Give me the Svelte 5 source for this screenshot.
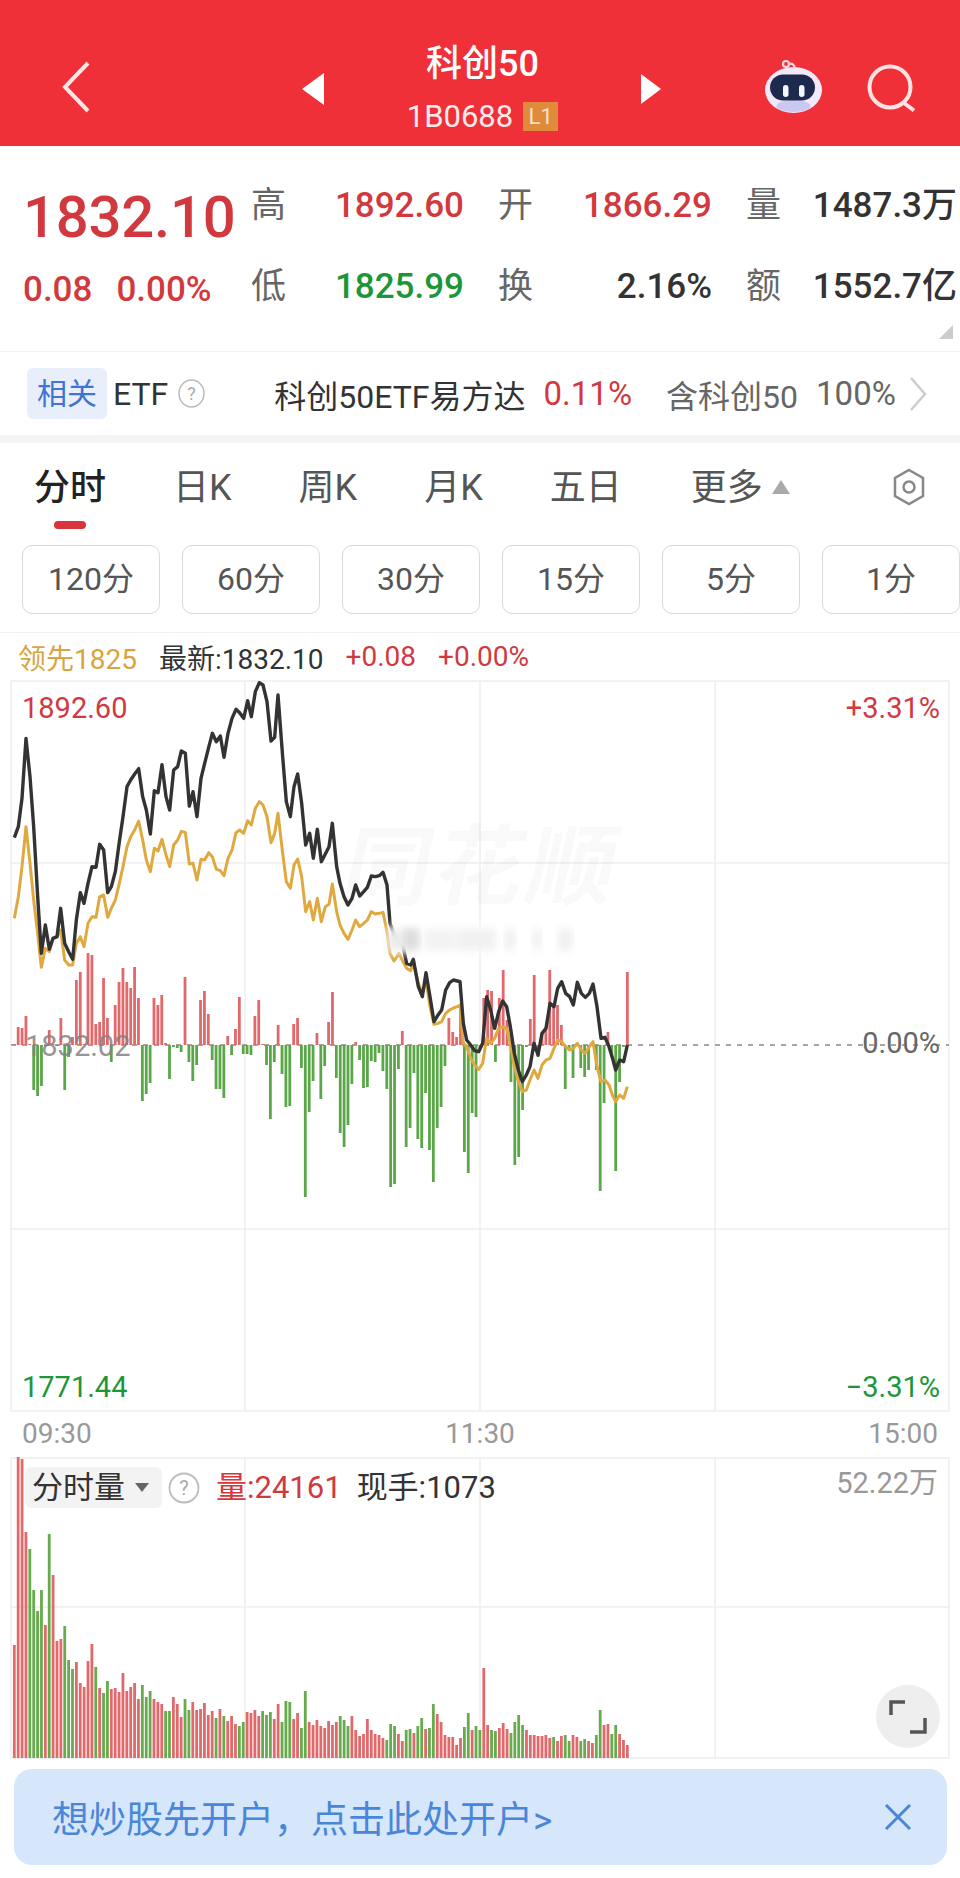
<script lang="ts">
	// values read off the reference: + is a red bar, - is a green bar
	const flow = [
		1, 18, 17, 29, 1, -45, -51, -41, -1, 15, 1, -1, 27, -45, -12, 8, 65, 73, 1, 92, 90, 21, 23, 67, 27, -17, 40, 63, 77, 63,
		57, 78, 47, -56, -49, -38, 47, 40, 50, 2, -34, -2, -3, -7, 68, -17, -36, -20, 45, 54, 31, -15, -44, -44, -53, 9, -10, 16, 48, -9,
		-9, -10, 29, 45, 1, -20, -74, -17, 20, -29, -62, -61, 21, 27, -23, -152, -67, -36, 12, -54, -21, 23, 53, -33, -88, -102, -80, -39, 3, -15,
		-43, -42, -16, -17, -8, -26, -44, -142, -139, -24, 14, -102, -83, -28, -94, -103, -48, -105, -137, -83, -62, -21, 27, 13, 8, 40, -107, -128, -68, -72,
		-3, 47, 55, 54, -17, 47, 75, 25, -37, -120, -112, -65, -2, 26, 70, -12, 12, 18, 75, 38, 40, 20, -44, -5, -33, 2, -23, -32, -25, 3,
		-25, -146, -58, 13, -12, -126, -37, -2, 73
	];
	const volume = [
		113, 302, 299, 226, -209, -168, -147, -168, 133, -224, 183, 117, 119, -132, -98, -89, 96, 75, 71, 97, 114, -91, 70, -65, -77, 69, 70, 66, 85, 67,
		71, 75, 59, -73, -61, -67, 59, 56, 54, -47, -47, 61, 54, 41, -59, -48, 56, 48, 49, 55, 43, 47, -40, 49, -42, 37, 42, 34, -32, -36,
		46, 45, 48, 42, -47, -43, -46, 39, 54, -36, -57, -56, 39, 45, -30, -67, 36, 33, 38, 32, 30, 37, 33, 36, -42, -38, -32, 42, 28, 22,
		24, 39, 28, 24, 23, 20, -18, -34, -32, 24, 17, -28, -29, 25, -32, -40, 29, -30, -54, 44, 36, 23, 21, 21, 13, 20, -31, -45, 28, -32,
		-28, 90, 33, -28, -27, 30, 35, 29, -25, -36, -43, -33, 28, 23, 23, 22, 22, 23, 20, -21, 17, 22, -23, -17, 23, 21, -17, -19, 17, 15,
		-23, -48, 33, 34, -24, -33, 24, 18, 13
	];
	const barX = (i: number) => 14.3 + i * 3.88;

	// x,y pairs in zoomed crop space, the left part and the right part of the day
	const blackLeft = [43,503,55,470,66,385,78,205,90,320,101,470,113,680,124,850,136,765,148,838,159,805,171,800,182,715,194,820,206,845,218,868,229,750,241,668,252,700,264,640,276,590,288,592,299,523,311,540,323,668,334,650,346,605,358,515,369,440,381,350,392,330,404,312,416,296,428,380,439,420,451,492,463,362,474,368,486,284,498,380,509,420,521,300,533,290,544,243,556,250,568,408,579,365,591,440,603,325,614,280,626,232,637,190,649,215,661,198,672,262,684,190,696,145,708,118,719,128,731,145,743,92,754,140,766,65,778,38,789,45,801,95,813,213,824,202,834,75,848,260,859,395,871,440,882,350,893,312,905,400,917,525,929,490,940,565,952,478,964,575,976,552,987,530,997,460,1010,590,1020,640];
	const goldLeft = [43,745,55,680,66,590,78,470,90,580,101,690,113,790,124,892,136,835,148,845,159,805,171,800,182,780,194,870,206,885,218,885,229,820,241,800,252,830,264,760,276,740,288,742,299,680,311,675,323,742,334,715,346,690,358,640,369,590,381,530,392,500,404,480,416,453,428,510,439,570,451,605,463,535,474,543,486,508,498,555,509,590,521,525,533,510,544,484,556,487,568,582,579,580,591,630,603,568,614,570,626,548,637,560,649,598,661,602,672,617,684,565,696,540,708,488,719,480,731,490,743,452,754,465,766,415,778,395,789,405,801,440,813,518,824,490,834,430,848,550,859,635,871,655,882,585,893,567,905,620,917,725,929,695,940,750,952,685,964,755,976,710,987,703,997,642,1010,725,1020,765];
	const blackRight = [12,350,24,375,36,355,47,315,59,348,71,335,82,322,94,288,106,290,118,287,129,277,141,315,150,430,165,470,177,480,189,500,200,550,212,555,220,538,235,620,247,650,258,578,270,650,282,725,294,705,305,690,317,630,329,608,340,600,352,603,360,605,370,730,380,780,392,795,404,812,416,815,428,790,440,650,452,690,464,745,476,695,488,663,500,680,511,740,523,820,535,870,547,905,559,885,570,860,582,790,594,825,606,760,618,745,630,670,642,680,653,625,665,605,677,640,689,650,700,675,712,607,724,640,736,652,748,640,759,612,771,680,783,775,795,772,807,800,819,840,827,870,839,840,851,845,862,795];
	const goldRight = [12,460,24,478,36,450,47,420,59,440,71,430,82,420,94,395,106,402,118,400,129,397,141,455,150,520,162,543,177,520,189,545,200,565,212,572,220,548,235,610,247,640,258,600,270,680,282,733,294,730,305,725,317,700,329,690,340,684,352,680,360,675,370,790,380,800,392,835,404,855,416,868,428,850,440,775,452,790,464,775,476,745,488,740,500,745,511,790,523,860,535,905,547,935,559,930,570,900,582,870,594,895,606,855,618,840,630,835,642,805,653,780,665,785,677,800,689,810,700,805,712,790,724,810,736,820,748,800,759,785,771,860,783,905,795,900,807,915,819,950,827,965,839,945,851,955,862,920];

	function toPoints(list: number[], x0: number, y0: number) {
		const out: string[] = [];
		for (let i = 0; i < list.length; i += 2) {
			out.push(`${x0 + list[i] / 3},${y0 + list[i + 1] / 3}`);
		}
		return out.join(' ');
	}
	const blackLine = toPoints(blackLeft, 0, 670) + ' ' + toPoints(blackRight, 340, 780);
	const goldLine = toPoints(goldLeft, 0, 670) + ' ' + toPoints(goldRight, 340, 780);

	const tabs = ['日K', '周K', '月K', '五日'];
	const periods = ['120分', '60分', '30分', '15分', '5分', '1分'];
	const smudges = [
		[388, 28, 0.5],
		[405, 14, 0.75],
		[424, 30, 0.3],
		[456, 40, 0.35],
		[505, 10, 0.4],
		[533, 8, 0.4],
		[558, 14, 0.4]
	];
</script>

<div class="page">
	<header class="topbar">
		<svg class="back" width="30" height="52" viewBox="0 0 30 52">
			<path d="M27 2 L4 26 L27 50" fill="none" stroke="#ffe6e6" stroke-width="4" />
		</svg>
		<svg class="tri prev" width="22" height="32" viewBox="0 0 22 32"><path d="M22 0 V32 L0 16 Z" fill="#fff" /></svg>
		<div class="title">
			<div class="name">科创50</div>
			<div class="code">1B0688<span class="level">L1</span></div>
		</div>
		<svg class="tri next" width="20" height="30" viewBox="0 0 20 30"><path d="M0 0 V30 L20 15 Z" fill="#fff" /></svg>
		<svg class="robot" width="62" height="56" viewBox="0 0 62 56">
			<circle cx="24" cy="5" r="3" fill="none" stroke="#f6d9dc" stroke-width="2.2" />
			<path d="M27 5 C30 4 33 6 33 10" fill="none" stroke="#f6d9dc" stroke-width="2.2" />
			<ellipse cx="31.5" cy="31" rx="28.5" ry="23" fill="#f1e9f7" />
			<ellipse cx="31.5" cy="47" rx="17" ry="6" fill="#c9c8f0" />
			<rect x="8" y="15.5" width="45" height="26" rx="13" fill="#1d2a4e" />
			<rect x="21" y="26" width="5.5" height="12" rx="2.7" fill="#f4f6ff" />
			<rect x="37" y="26" width="5.5" height="12" rx="2.7" fill="#f4f6ff" />
		</svg>
		<svg class="search" width="52" height="54" viewBox="0 0 52 54">
			<circle cx="24" cy="24" r="20.5" fill="none" stroke="#ffe3e3" stroke-width="4" />
			<path d="M38 40 L48 47.5" stroke="#ffe3e3" stroke-width="4" />
		</svg>
	</header>

	<section class="stats">
		<div class="price">
			<div class="last">1832.10</div>
			<div class="change"><span>0.08</span><span>0.00%</span></div>
		</div>
		<div class="quotes">
			<div class="pair"><span class="label">高</span><span class="up">1892.60</span></div>
			<div class="pair"><span class="label">开</span><span class="up">1866.29</span></div>
			<div class="pair"><span class="label">量</span><span>1487.3万</span></div>
			<div class="pair"><span class="label">低</span><span class="down">1825.99</span></div>
			<div class="pair"><span class="label">换</span><span>2.16%</span></div>
			<div class="pair"><span class="label">额</span><span>1552.7亿</span></div>
		</div>
		<span class="corner"></span>
	</section>

	<section class="etf">
		<span class="chip">相关</span>
		<span class="etf-name">ETF</span>
		<svg class="help" width="27" height="29" viewBox="0 0 27 29">
			<ellipse cx="13.5" cy="14.5" rx="12.5" ry="13.5" fill="none" stroke="#bbb" stroke-width="1.5" />
			<text x="13.5" y="21" text-anchor="middle" font-size="18" fill="#aaa" font-family="Roboto, sans-serif">?</text>
		</svg>
		<span class="fund">科创50ETF易方达</span>
		<span class="fund-pct">0.11%</span>
		<span class="holds">含科创50</span>
		<span class="holds-pct">100%</span>
		<svg class="more" width="18" height="36" viewBox="0 0 18 36">
			<path d="M2 2 L16 18 L2 34" fill="none" stroke="#ccc" stroke-width="2.5" />
		</svg>
	</section>

	<div class="gap"></div>

	<nav class="tabs">
		<div class="tab active">
			<span>分时</span>
			<i></i>
		</div>
		{#each tabs as tab}
			<div class="tab"><span>{tab}</span></div>
		{/each}
		<div class="tab extra">
			<span>更多</span>
			<b></b>
		</div>
		<svg class="hex" width="38" height="38" viewBox="0 0 38 38">
			<path d="M19 2 L33 10 V28 L19 36 L5 28 V10 Z" fill="none" stroke="#888" stroke-width="2.5" />
			<circle cx="19" cy="19" r="5.5" fill="none" stroke="#888" stroke-width="2.5" />
		</svg>
	</nav>

	<div class="periods">
		{#each periods as period}
			<div class="period">{period}</div>
		{/each}
	</div>

	<div class="info">
		<span class="lead">领先1825</span>
		<span class="latest">最新:1832.10</span>
		<span class="up">+0.08</span>
		<span class="up">+0.00%</span>
	</div>

	<div class="chart main">
		<svg width="960" height="732" viewBox="0 680 960 732">
			<defs>
				<filter id="blur" x="-20%" y="-60%" width="140%" height="220%"><feGaussianBlur stdDeviation="4" /></filter>
			</defs>
			<g stroke="#eee" stroke-width="1.5" fill="none">
				<rect x="11" y="681" width="938" height="730" />
				<path d="M245 681 V1411 M480 681 V1411 M715 681 V1411 M11 863 H949 M11 1229 H949" />
			</g>
			<path d="M11 1045 H949" stroke="#aaa79a" stroke-width="2" stroke-dasharray="5 6" />
			{#each flow as v, i}
				<rect
					x={barX(i) - 1.4}
					y={v > 0 ? 1045 - v : 1045}
					width="2.8"
					height={Math.abs(v)}
					fill={v > 0 ? '#e2696b' : '#5ca64a'}
				/>
			{/each}
			<polyline points={goldLine} fill="none" stroke="#dfa93f" stroke-width="3" stroke-linejoin="round" />
			<polyline points={blackLine} fill="none" stroke="#333" stroke-width="3.4" stroke-linejoin="round" />
			<rect x="388" y="926" width="184" height="26" fill="#fff" filter="url(#blur)" />
			{#each smudges as s}
				<rect x={s[0]} y="929" width={s[1]} height="21" fill="#d5d5d5" opacity={s[2]} filter="url(#blur)" />
			{/each}
		</svg>
		<span class="mark">同花顺</span>
		<span class="tag high">1892.60</span>
		<span class="tag pct-high">+3.31%</span>
		<span class="tag ref">1832.02</span>
		<span class="tag pct-zero">0.00%</span>
		<span class="tag low">1771.44</span>
		<span class="tag pct-low">−3.31%</span>
	</div>

	<div class="times">
		<span>09:30</span>
		<span>11:30</span>
		<span>15:00</span>
	</div>

	<div class="chart vol">
		<svg width="960" height="302" viewBox="0 1457 960 302">
			<g stroke="#eee" stroke-width="1.5" fill="none">
				<rect x="11" y="1458" width="938" height="300" />
				<path d="M245 1458 V1758 M480 1458 V1758 M715 1458 V1758 M11 1607 H949" />
			</g>
			{#each volume as v, i}
				<rect
					x={barX(i) - 1.4}
					y={1758 - Math.abs(v)}
					width="2.8"
					height={Math.abs(v)}
					fill={v > 0 ? '#e2696b' : '#68ab4e'}
				/>
			{/each}
		</svg>
		<div class="vol-head">
			<div class="vol-chip">分时量<b></b></div>
			<svg class="help" width="32" height="32" viewBox="0 0 32 32">
				<circle cx="16" cy="16" r="14.5" fill="none" stroke="#bbb" stroke-width="1.8" />
				<text x="16" y="23" text-anchor="middle" font-size="20" fill="#aaa" font-family="Roboto, sans-serif">?</text>
			</svg>
			<span class="vol-now">量:24161</span>
			<span class="vol-hand">现手:1073</span>
		</div>
		<span class="vol-max">52.22万</span>
		<div class="expand">
			<svg width="40" height="36" viewBox="0 0 40 36">
				<path d="M3 16 V3 H17 M37 19 V33 H22" fill="none" stroke="#555" stroke-width="3.5" />
			</svg>
		</div>
	</div>

	<div class="banner">
		<span>想炒股先开户，点击此处开户&gt;</span>
		<svg width="28" height="28" viewBox="0 0 28 28">
			<path d="M2 2 L26 26 M26 2 L2 26" stroke="#4a86d8" stroke-width="3" />
		</svg>
	</div>
</div>

<style>
	:global(body) {
		margin: 0;
		background: #fff;
	}

	.page {
		width: 960px;
		height: 1878px;
		overflow: hidden;
		font-family: Roboto, 'Noto Sans CJK SC', sans-serif;
		color: #333;
		background: #fff;
	}

	.up {
		color: #d2393f;
	}

	.down {
		color: #1d9637;
	}

	/* top bar */
	.topbar {
		display: flex;
		align-items: center;
		height: 146px;
		padding-top: 27px;
		box-sizing: border-box;
		background: #f03039;
		color: #fff;
	}

	.back {
		margin-left: 61px;
	}

	.prev {
		margin-left: 211px;
		margin-top: 4px;
	}

	.title {
		width: 317px;
		text-align: center;
		line-height: 1;
	}

	.name {
		font-size: 36px;
		font-weight: 500;
		line-height: 40px;
		margin-top: 2px;
	}

	.code {
		display: flex;
		align-items: center;
		justify-content: center;
		margin-top: 18px;
		font-size: 31px;
		height: 30px;
		color: #fdeaea;
	}

	.level {
		display: inline-block;
		width: 35px;
		height: 29px;
		margin-left: 10px;
		background: #e08a3c;
		color: #fbe3c9;
		font-size: 22px;
		line-height: 29px;
		text-align: center;
	}

	.next {
		margin-top: 4px;
	}

	.robot {
		margin-left: 101px;
	}

	.search {
		margin-left: 42px;
		margin-top: 6px;
	}

	/* quote block */
	.stats {
		position: relative;
		display: flex;
		height: 206px;
		border-bottom: 1px solid #f2f2f2;
		box-sizing: border-box;
		font-weight: 500;
	}

	.price {
		width: 251px;
		padding-left: 23px;
		box-sizing: border-box;
		color: #d2393f;
	}

	.last {
		margin-top: 37px;
		font-size: 58px;
		line-height: 68px;
		letter-spacing: -0.2px;
	}

	.change {
		display: flex;
		gap: 24px;
		margin-top: 19px;
		font-size: 35px;
		line-height: 40px;
	}

	.quotes {
		display: grid;
		grid-template-columns: 213px 214px 211px;
		column-gap: 34px;
		row-gap: 41px;
		align-content: start;
		padding-top: 40px;
		font-size: 35px;
		line-height: 40px;
	}

	.pair {
		display: flex;
		justify-content: space-between;
	}

	.label {
		color: #666;
		font-weight: 400;
		font-size: 35px;
	}

	.corner {
		position: absolute;
		right: 7px;
		bottom: 12px;
		width: 0;
		height: 0;
		border-left: 14px solid transparent;
		border-bottom: 14px solid #ccc;
	}

	/* related fund row */
	.etf {
		display: flex;
		align-items: center;
		height: 83px;
		font-size: 32px;
		white-space: nowrap;
	}

	.chip {
		width: 80px;
		height: 51px;
		margin-left: 27px;
		border-radius: 6px;
		background: #e9effa;
		color: #3f74d0;
		font-size: 30px;
		line-height: 51px;
		text-align: center;
	}

	.etf-name {
		margin-left: 6px;
	}

	.etf .help {
		margin-left: 10px;
	}

	.fund {
		margin-left: 69px;
	}

	.fund-pct {
		margin-left: 18px;
		color: #d2393f;
		font-size: 33px;
	}

	.holds {
		margin-left: 34px;
		color: #666;
	}

	.holds-pct {
		margin-left: 18px;
		color: #666;
		font-size: 33px;
	}

	.more {
		margin-left: 13px;
	}

	.gap {
		height: 8px;
		background: #f5f5f5;
	}

	/* period tabs */
	.tabs {
		display: flex;
		gap: 67px;
		height: 89px;
		padding: 23px 32px 0 34px;
		box-sizing: border-box;
		font-size: 36px;
		line-height: 44px;
		color: #555;
	}

	.tab {
		display: flex;
		flex-direction: column;
		align-items: center;
	}

	.tab.active {
		color: #222;
		font-weight: 500;
	}

	.tab i {
		width: 32px;
		height: 8px;
		margin-top: 11px;
		border-radius: 4px;
		background: #d8343a;
	}

	.tab.extra {
		flex-direction: row;
		align-items: flex-start;
		margin-left: 2px;
	}

	.tab.extra b {
		width: 0;
		height: 0;
		margin: 14px 0 0 9px;
		border-left: 9px solid transparent;
		border-right: 9px solid transparent;
		border-bottom: 14px solid #aaa;
	}

	.hex {
		margin-left: auto;
		margin-top: 2px;
	}

	.periods {
		display: flex;
		gap: 22px;
		padding: 13px 0 18px 22px;
		border-bottom: 1px solid #f0f0f0;
	}

	.period {
		flex: 0 0 138px;
		box-sizing: border-box;
		height: 69px;
		border: 1.5px solid #d9d9d9;
		border-radius: 10px;
		color: #555;
		font-size: 32px;
		line-height: 66px;
		text-align: center;
	}

	.info {
		display: flex;
		align-items: center;
		gap: 22px;
		height: 47px;
		padding: 0 0 0 18px;
		font-size: 28px;
		white-space: nowrap;
	}

	.lead {
		color: #d9a441;
	}

	/* charts */
	.chart {
		position: relative;
	}

	.chart svg {
		display: block;
	}

	.main {
		height: 732px;
	}

	.tag {
		position: absolute;
		font-size: 29px;
		line-height: 34px;
	}

	.high {
		left: 22px;
		top: 11px;
		color: #d2393f;
	}

	.pct-high {
		right: 20px;
		top: 11px;
		color: #d2393f;
	}

	.ref {
		left: 25px;
		top: 349px;
		color: rgba(130, 130, 130, 0.85);
	}

	.pct-zero {
		right: 20px;
		top: 346px;
		color: #666;
	}

	.low {
		left: 22px;
		top: 690px;
		color: #1d9637;
	}

	.pct-low {
		right: 20px;
		top: 690px;
		color: #1d9637;
	}

	.mark {
		position: absolute;
		left: 345px;
		top: 138px;
		font-size: 88px;
		line-height: 100px;
		font-weight: 700;
		letter-spacing: 4px;
		color: rgba(0, 0, 0, 0.022);
		transform: skewX(-12deg);
	}

	.times {
		display: flex;
		justify-content: space-between;
		height: 45px;
		padding: 0 22px;
		color: #999;
		font-size: 28px;
		line-height: 44px;
	}

	.vol {
		height: 302px;
	}

	.vol-head {
		position: absolute;
		left: 25px;
		top: 10px;
		display: flex;
		align-items: center;
		white-space: nowrap;
		font-size: 31px;
		line-height: 41px;
	}

	.vol-chip {
		display: flex;
		align-items: center;
		width: 137px;
		height: 41px;
		padding-left: 7px;
		box-sizing: border-box;
		border-radius: 6px;
		background: #f3f3f3;
	}

	.vol-chip b {
		width: 0;
		height: 0;
		margin-left: 10px;
		border-left: 7px solid transparent;
		border-right: 7px solid transparent;
		border-top: 9px solid #666;
	}

	.vol-head .help {
		margin-left: 6px;
	}

	.vol-now {
		margin-left: 16px;
		color: #d2393f;
	}

	.vol-hand {
		margin-left: 15px;
	}

	.vol-max {
		position: absolute;
		right: 22px;
		top: 9px;
		color: #999;
		font-size: 29px;
		line-height: 34px;
	}

	.expand {
		position: absolute;
		left: 876px;
		top: 228px;
		display: flex;
		align-items: center;
		justify-content: center;
		width: 64px;
		height: 63px;
		border-radius: 50%;
		background: #eee;
	}

	.banner {
		display: flex;
		align-items: center;
		justify-content: space-between;
		box-sizing: border-box;
		width: 933px;
		height: 96px;
		margin: 10px 0 0 14px;
		padding: 0 35px 0 38px;
		border-radius: 18px;
		background: #d6e6fb;
		color: #4a86d8;
		font-size: 37px;
		white-space: nowrap;
	}
</style>
